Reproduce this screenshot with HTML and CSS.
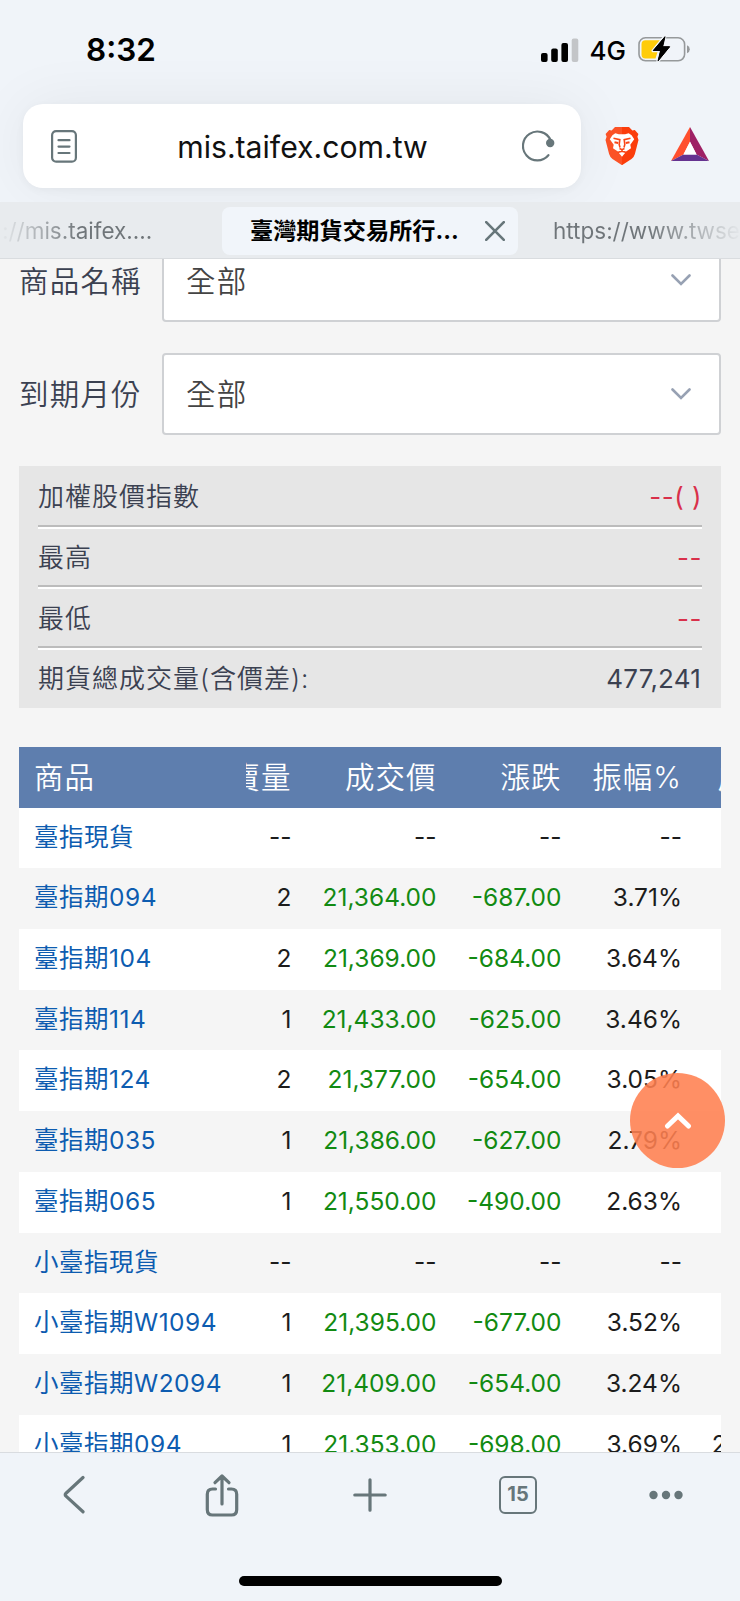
FILE: index.html
```html
<!DOCTYPE html>
<html lang="zh-Hant">
<head>
  <meta charset="UTF-8" />
  <meta name="viewport" content="width=device-width, initial-scale=1.0"/>
  <title>臺灣期貨交易所行情資訊網</title>

  <link rel="stylesheet" href="styles.css">
</head>
<body>
  <header class="browser-top">
    <div class="status-bar">
      <span class="clock">8:32</span>
      <div class="status-icons">
        <svg class="signal" width="38" height="24" viewBox="0 0 38 24">
          <rect x="0" y="15" width="6.6" height="9" rx="2"/>
          <rect x="10.2" y="10.5" width="6.6" height="13.5" rx="2"/>
          <rect x="20.4" y="5" width="6.6" height="19" rx="2"/>
          <rect x="30.7" y="0.5" width="6.6" height="23.5" rx="2" fill="#c3c5c8"/>
        </svg>
        <span class="network">4G</span>
        <svg class="battery" width="52" height="28" viewBox="0 0 52 28">
          <rect x="1" y="2.8" width="45.6" height="23" rx="6.5" fill="none" stroke="#96999b" stroke-width="1.6"/>
          <path d="M49 10.3 q2.8 1.2 2.8 4 t-2.8 4z" fill="#96999b"/>
          <path d="M7.5 5.3 H22 L15 17 H19.5 L17.5 23.5 H7.5 Q3.5 23.5 3.5 19.5 V9.3 Q3.5 5.3 7.5 5.3z" fill="#ffcc0a"/>
          <path d="M27 1.2 L15 15.8 H22.4 L19.8 26.4 L32 11.6 H24.8z" fill="#000" stroke="#f1f4f8" stroke-width="3" stroke-linejoin="round" paint-order="stroke"/>
          <path d="M27 1.8 L15.3 15.5 H22.6 L20.1 25.8 L31.6 11.8 H24.6z" stroke="#000" stroke-width="1" stroke-linejoin="round"/>
        </svg>
      </div>
    </div>

    <div class="address-row">
      <div class="address-bar">
        <svg class="reader" width="26" height="33" viewBox="0 0 26 33">
          <rect x="1.1" y="1.1" width="23.8" height="30.6" rx="4"/>
          <path d="M7.5 10.2h11M7.5 16.6h11M7.5 23h11"/>
        </svg>
        <span class="url">mis.taifex.com.tw</span>
        <svg class="reload" width="34" height="32" viewBox="0 0 34 32">
          <path d="M28.5 10 A14.4 14.4 0 1 0 26.4 25.2"/>
          <circle cx="28.2" cy="13" r="4.2"/>
        </svg>
      </div>
      <svg class="brave" width="34" height="38" viewBox="0 0 34 38">
        <defs>
          <linearGradient id="lion">
            <stop offset=".5" stop-color="#fb5226"/>
            <stop offset=".5" stop-color="#fb3d0b"/>
          </linearGradient>
        </defs>
        <path d="M10 0h14l3.4 3.6 2.4-.5 3.6 4-1 2.6 1.1 3.2-3.6 14.2q-.8 3-3.4 5L17 38.2l-9.500-6.100q-2.600-2-3.400-5L.5 12.900l1.100-3.200-1-2.600 3.600-4 2.400.5z" fill="url(#lion)"/>
        <path d="M10.300 6.300 7.400 8.300 4.800 12.300 8.700 17.700 8 21.200l4.500 3 4.500 5.600 4.500-5.600 4.500-3-.7-3.500 3.900-5.400-2.600-4-2.900-2-3.600.9h-6.200z" fill="#fff"/>
        <g fill="none" stroke="#fa4616" stroke-width="1.600">
          <path d="M8.500 11.200 14.800 12.600 14.200 17.500 15 20.500M25.500 11.200 19.200 12.600 19.800 17.500 19 20.500"/>
          <path d="M9.500 15.300 13.200 16M24.500 15.300 20.800 16" stroke-width="2"/>
          <path d="M14.500 21.500 17 22.700 19.500 21.500M17 22.500V24.500M12.500 25.500 17 24.200 21.500 25.500"/>
        </g>
      </svg>
      <svg class="bat" width="38" height="34" viewBox="0 0 38 34">
        <path d="M19 0 0 34 12.500 27.500 19 15z" fill="#ff4f2e"/>
        <path d="M19 0 38 34 25.500 27.500 19 15z" fill="#9e2064"/>
        <path d="M0 34h38l-12.500-6.500h-13z" fill="#653290"/>
        <path d="M19 14.500 25.600 27.500H12.400z" fill="#fff"/>
      </svg>
    </div>

    <div class="tabs">
      <div class="tab tab-left">://mis.taifex....</div>
      <div class="tab active">
        <span>臺灣期貨交易所行...</span>
        <svg width="20" height="20" viewBox="0 0 20 20"><path d="M1.200 1.200 18.800 18.800M18.800 1.200 1.200 18.800"/></svg>
      </div>
      <div class="tab tab-right">https://www.twse</div>
    </div>
  </header>

  <main class="page">
    <div class="filters">
      <div class="filter">
        <label>商品名稱</label>
        <div class="select">全部 <svg width="20" height="12" viewBox="0 0 20 12"><path d="M1.500 1.500 10 10 18.500 1.500"/></svg></div>
      </div>
      <div class="filter">
        <label>到期月份</label>
        <div class="select">全部 <svg width="20" height="12" viewBox="0 0 20 12"><path d="M1.500 1.500 10 10 18.500 1.500"/></svg></div>
      </div>
    </div>

    <div class="summary">
      <div class="item"><span>加權股價指數</span><span class="red">--( )</span></div>
      <div class="item"><span>最高</span><span class="red">--</span></div>
      <div class="item"><span>最低</span><span class="red">--</span></div>
      <div class="item"><span>期貨總成交量(含價差):</span><span class="total">477,241</span></div>
    </div>

    <div class="quotes">
      <div class="row head"><span>商品</span><span>賣量</span><span>成交價</span><span>漲跌</span><span>振幅%</span><span>成交量</span></div>
      <div class="row"><a>臺指現貨</a><span>--</span><span>--</span><span>--</span><span>--</span></div>
      <div class="row"><a>臺指期094</a><span>2</span><span class="down">21,364.00</span><span class="down">-687.00</span><span>3.71%</span></div>
      <div class="row"><a>臺指期104</a><span>2</span><span class="down">21,369.00</span><span class="down">-684.00</span><span>3.64%</span></div>
      <div class="row"><a>臺指期114</a><span>1</span><span class="down">21,433.00</span><span class="down">-625.00</span><span>3.46%</span></div>
      <div class="row"><a>臺指期124</a><span>2</span><span class="down">21,377.00</span><span class="down">-654.00</span><span>3.05%</span></div>
      <div class="row"><a>臺指期035</a><span>1</span><span class="down">21,386.00</span><span class="down">-627.00</span><span>2.79%</span></div>
      <div class="row"><a>臺指期065</a><span>1</span><span class="down">21,550.00</span><span class="down">-490.00</span><span>2.63%</span></div>
      <div class="row"><a>小臺指現貨</a><span>--</span><span>--</span><span>--</span><span>--</span></div>
      <div class="row"><a>小臺指期W1094</a><span>1</span><span class="down">21,395.00</span><span class="down">-677.00</span><span>3.52%</span></div>
      <div class="row"><a>小臺指期W2094</a><span>1</span><span class="down">21,409.00</span><span class="down">-654.00</span><span>3.24%</span></div>
      <div class="row"><a>小臺指期094</a><span>1</span><span class="down">21,353.00</span><span class="down">-698.00</span><span>3.69%</span><span>234,086</span></div>
    </div>

    <div class="go-top">
      <svg width="28" height="18" viewBox="0 0 28 18"><path d="M3.500 14 14 4 24.500 14"/></svg>
    </div>
  </main>

  <footer class="browser-bottom">
    <nav class="toolbar">
      <div class="tool"><svg width="22" height="40" viewBox="0 0 22 40"><path d="M20 2.500 3 18.200q-1.600 1.500 0 3L20 36.800" stroke-width="3.200"/></svg></div>
      <div class="tool"><svg width="34" height="44" viewBox="0 0 34 44"><path d="M10.500 16H7.500q-5.200 0-5.200 5.200v15.600q0 5.200 5.200 5.200h19q5.200 0 5.200-5.200V21.200q0-5.200-5.200-5.200h-3M17 31V3.500M10 9.700 17 3l7 6.700" stroke-width="3.200"/></svg></div>
      <div class="tool"><svg width="34" height="34" viewBox="0 0 34 34"><path d="M17 1.800v30.400M1.800 17h30.400" stroke-width="3.200"/></svg></div>
      <div class="tool"><span class="tab-count">15</span></div>
      <div class="tool"><svg class="dots" width="34" height="10" viewBox="0 0 34 10"><circle cx="4.500" cy="5" r="4.200"/><circle cx="17" cy="5" r="4.200"/><circle cx="29.500" cy="5" r="4.200"/></svg></div>
    </nav>
    <div class="home-indicator"></div>
  </footer>
</body>
</html>
```
FILE: styles.css
```css
:root {
  --chrome-bg: #f0f4f9;
  --icon-color: #67767a;
  --page-bg: #f5f5f5;
  --text-color: #3b4151;
  --link-color: #0d5cb0;
  --head-color: #5e7eae;
  --down-color: #128a12;
  --red-color: #d9304a;
}

* {
  box-sizing: border-box;
}

body {
  margin: 0;
  width: 740px;
  height: 1601px;
  overflow: hidden;
  display: flex;
  flex-direction: column;
  font-family: Inter, "Noto Sans CJK TC", sans-serif;
  background-color: var(--chrome-bg);
}

svg {
  display: block;
  flex: none;
}

/* browser header */
.browser-top {
  height: 259px;
  flex: none;
  overflow: hidden;
  border-bottom: 1px solid #d9dcdf;
}

.status-bar {
  height: 104px;
  display: flex;
  justify-content: space-between;
  padding: 30px 50px 0 86px;
}

.clock {
  font-size: 31.5px;
  font-weight: 600;
  line-height: 40px;
}

.status-icons {
  height: 38px;
  display: flex;
  align-items: center;
}

.network {
  font-size: 26px;
  font-weight: 500;
  margin: 2px 12px 0 11px;
}

.signal {
  margin-top: 1px;
}

.address-row {
  height: 84px;
  display: flex;
  align-items: center;
  padding-left: 23px;
}

.address-bar {
  width: 558px;
  height: 84px;
  flex: none;
  display: flex;
  align-items: center;
  justify-content: space-between;
  padding: 0 25px 0 28px;
  border-radius: 20px;
  background-color: #fff;
  box-shadow: 0 2px 8px rgba(0, 0, 0, 0.04), 0 0 60px rgba(0, 0, 0, 0.06);
}

.reader,
.reload {
  fill: none;
  stroke: var(--icon-color);
  stroke-width: 2.2;
  stroke-linecap: round;
}

.reload circle {
  fill: var(--icon-color);
  stroke: none;
}

.url {
  font-size: 30.2px;
  color: #111;
  padding: 2px 0 0 6px;
}

.brave {
  margin-left: 24px;
}

.bat {
  margin: -4px 0 0 32px;
}

.tabs {
  position: relative;
  margin-top: 14px;
  height: 57px;
  display: flex;
  align-items: center;
  background-color: #e8ebee;
  font-size: 22.5px;
  color: #6f7579;
}

.tab {
  height: 48px;
  line-height: 48px;
  white-space: nowrap;
}

.tab-left {
  width: 222px;
  padding-left: 2px;
  color: transparent;
  background: linear-gradient(90deg, #e8ebee, #6f7579 80px);
  -webkit-background-clip: text;
  background-clip: text;
}

.tab.active {
  width: 296px;
  display: flex;
  align-items: center;
  justify-content: space-between;
  padding: 0 13px 0 28px;
  border-radius: 8px;
  background-color: #f1f5fa;
  color: #000;
  font-size: 23.2px;
  font-weight: 700;
}

.tab.active svg {
  fill: none;
  stroke: var(--icon-color);
  stroke-width: 2.6;
  stroke-linecap: round;
}

.tab-right {
  width: 222px;
  padding-left: 35px;
  color: transparent;
  background: linear-gradient(90deg, #6f7579 130px, #e8ebee 225px);
  -webkit-background-clip: text;
  background-clip: text;
}

/* page content */
.page {
  position: relative;
  height: 1193px;
  flex: none;
  overflow: hidden;
  padding: 0 19px;
  background-color: var(--page-bg);
  color: var(--text-color);
}

.filters {
  margin-top: -20px;
}

.filter {
  display: flex;
  align-items: center;
  margin-bottom: 31px;
  font-size: 29.5px;
  font-weight: 350;
  letter-spacing: 1.2px;
}

.filter label {
  width: 143px;
  padding-bottom: 3px;
}

.select {
  flex: 1;
  height: 82.5px;
  display: flex;
  align-items: center;
  justify-content: space-between;
  padding: 0 28px 3px 22px;
  border: 2px solid #cfd1d4;
  border-radius: 4px;
  background-color: #fff;
  color: #444;
}

.select svg {
  margin-top: 3px;
  fill: none;
  stroke: #97a1b3;
  stroke-width: 2.6;
  stroke-linecap: round;
}

.summary {
  height: 242px;
  padding: 0 19px;
  background-color: #e6e6e6;
  font-size: 26px;
  font-weight: 350;
  letter-spacing: 1px;
}

.item {
  height: 60.7px;
  display: flex;
  align-items: center;
  justify-content: space-between;
  padding-top: 2px;
  line-height: 58px;
}

.item:not(:last-child) {
  box-shadow: inset 0 -2px 0 #bcbcbc, 0 2px 0 #fff;
}

.red {
  color: var(--red-color);
  font-weight: 400;
  letter-spacing: 0.5px;
}

.total {
  padding-right: 1px;
  font-weight: 400;
  letter-spacing: 0.2px;
}

.quotes {
  margin-top: 39px;
  overflow: hidden;
  font-size: 24.5px;
  color: #1c1c1c;
}

.row {
  display: grid;
  grid-template-columns: 227px 57.5px 145px 125px 120.5px 127px;
  height: 60.7px;
  line-height: 59px;
}

.row:nth-child(even) {
  background-color: #fff;
}

.row > * {
  display: flex;
  justify-content: flex-end;
  padding-right: 12px;
  white-space: nowrap;
}

.row > :first-child {
  justify-content: flex-start;
  padding: 0 0 0 15px;
}

.row a {
  color: var(--link-color);
  font-weight: 370;
  letter-spacing: 0.5px;
}

.row.head {
  background-color: var(--head-color);
  color: #fff;
  font-size: 29.5px;
  font-weight: 350;
  line-height: 61px;
  letter-spacing: 1px;
}

.row.head :nth-child(2) {
  overflow: hidden;
}

.down {
  color: var(--down-color);
}

.go-top {
  position: absolute;
  right: 15px;
  bottom: 284px;
  width: 95px;
  height: 95px;
  display: flex;
  align-items: center;
  justify-content: center;
  border-radius: 50%;
  background-color: rgba(255, 127, 80, 0.88);
}

.go-top path {
  fill: none;
  stroke: #fff;
  stroke-width: 5;
  stroke-linecap: round;
}

/* browser toolbar */
.browser-bottom {
  flex: 1;
  border-top: 1px solid #d9dce0;
}

.toolbar {
  display: grid;
  grid-template-columns: repeat(5, 1fr);
  height: 84px;
}

.tool {
  display: flex;
  align-items: center;
  justify-content: center;
}

.tool svg {
  fill: none;
  stroke: var(--icon-color);
  stroke-linecap: round;
  stroke-linejoin: round;
}

.tool .dots {
  fill: var(--icon-color);
  stroke: none;
}

.tab-count {
  width: 38px;
  height: 38px;
  border: 2.5px solid var(--icon-color);
  border-radius: 6px;
  color: var(--icon-color);
  font-size: 20px;
  font-weight: 700;
  line-height: 33px;
  text-align: center;
}

.home-indicator {
  width: 263px;
  height: 10px;
  margin: 39px auto 0;
  border-radius: 5px;
  background-color: #000;
}
```
